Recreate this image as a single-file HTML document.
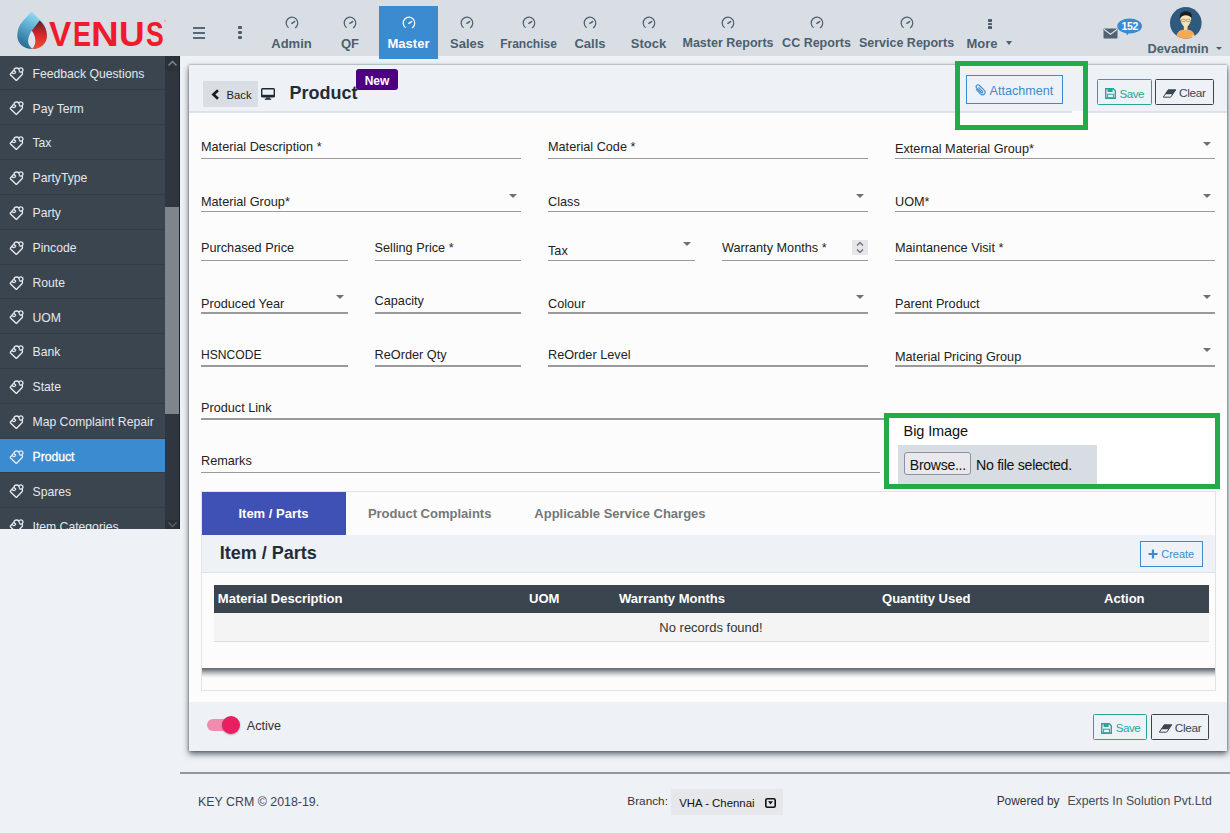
<!DOCTYPE html>
<html><head><meta charset="utf-8"><title>Product</title>
<style>
html,body{margin:0;padding:0;}
body{width:1230px;height:833px;overflow:hidden;position:relative;font-family:"Liberation Sans", sans-serif;background:#eef1f5;}
.r{position:absolute;}
.t{position:absolute;white-space:nowrap;}
</style></head><body>
<div class="r" style="left:0px;top:0px;width:1230px;height:833px;background:#eef1f5"></div>
<div class="r" style="left:0px;top:0px;width:1230px;height:56px;background:#d9dee5"></div>
<svg class="r" style="left:0px;top:0px" width="60" height="56" viewBox="0 0 60 56">
<defs>
<linearGradient id="gb" x1="0.6" y1="0" x2="0.2" y2="1"><stop offset="0" stop-color="#95e4f8"/><stop offset="0.55" stop-color="#4f9cc4"/><stop offset="1" stop-color="#23658f"/></linearGradient>
<linearGradient id="gr" x1="0" y1="0" x2="0" y2="1"><stop offset="0" stop-color="#5e2426"/><stop offset="0.5" stop-color="#d8252a"/><stop offset="1" stop-color="#f5502a"/></linearGradient>
</defs>
<path d="M31.5 11.4 L22.5 21.5 C19.5 25 17.3 29.5 17.3 35.5 C17.3 43.5 23.5 49 32.1 49 C40.7 49 46.9 43.5 46.9 35.5 C46.9 29.5 44.7 25 41.7 21.5 Z" fill="url(#gb)"/>
<path d="M39.6 20.6 L41.7 22.5 C44.7 26 46.9 30 46.9 35.5 C46.9 43.5 40.7 49 32.3 49 C34.8 46 35.8 43 35.3 39.7 C34.9 36.2 33.6 33.2 31.8 30.8 Z" fill="url(#gr)"/>
<path d="M31.8 30.8 C29.6 33.8 28.1 37.4 28.1 41 C28.1 44.4 29.9 46.9 32.3 48.8 C34.6 46 35.6 43 35.3 39.7 C34.9 36.2 33.6 33.2 31.8 30.8 Z" fill="#dfe4ea"/>
</svg>
<div class="t" style="left:49.00px;top:17.2px;font-size:35.5px;line-height:34px;font-weight:700;color:#ef1a2b;transform:scaleX(0.94);transform-origin:0 0">V</div>
<div class="t" style="left:72.60px;top:17.2px;font-size:35.5px;line-height:34px;font-weight:700;color:#ef1a2b;transform:scaleX(0.76);transform-origin:0 0">E</div>
<div class="t" style="left:91.13px;top:17.2px;font-size:35.5px;line-height:34px;font-weight:700;color:#ef1a2b;transform:scaleX(1.08);transform-origin:0 0">N</div>
<div class="t" style="left:118.90px;top:17.2px;font-size:35.5px;line-height:34px;font-weight:700;color:#ef1a2b;transform:scaleX(1.0);transform-origin:0 0">U</div>
<div class="t" style="left:145.55px;top:17.2px;font-size:35.5px;line-height:34px;font-weight:700;color:#ef1a2b;transform:scaleX(0.75);transform-origin:0 0">S</div>
<div class="r" style="left:163.5px;top:19.5px;width:2.4px;height:2.4px;border-radius:50%;background:#f3a0a6;"></div>
<div class="r" style="left:193.2px;top:27.2px;width:12.0px;height:1.6999999999999993px;background:#56697a"></div>
<div class="r" style="left:193.2px;top:32.2px;width:12.0px;height:1.7000000000000028px;background:#56697a"></div>
<div class="r" style="left:193.2px;top:37.2px;width:12.0px;height:1.7000000000000028px;background:#56697a"></div>
<div class="r" style="left:238.2px;top:26px;width:4.0px;height:3.3000000000000007px;background:#4b5f6d;border-radius:1px"></div>
<div class="r" style="left:238.2px;top:30.8px;width:4.0px;height:3.3000000000000007px;background:#4b5f6d;border-radius:1px"></div>
<div class="r" style="left:238.2px;top:35.5px;width:4.0px;height:3.299999999999997px;background:#4b5f6d;border-radius:1px"></div>
<div class="r" style="left:379px;top:6px;width:59px;height:53px;background:#3a8bd0"></div>
<svg class="r" style="left:284.5px;top:16.4px" width="14" height="14" viewBox="0 0 14 14">
<path d="M3.59 11.69 A5.8 5.8 0 1 1 10.07 11.92" fill="none" stroke="#4b5f6d" stroke-width="1.25"/>
<path d="M6.9 7.3 L9.6 5.6" stroke="#4b5f6d" stroke-width="1.5" stroke-linecap="round"/>
</svg>
<div class="t" style="left:91.5px;width:400px;text-align:center;top:36.80px;font-size:13px;line-height:13px;font-weight:700;color:#4b5f6d;">Admin</div>
<svg class="r" style="left:343px;top:16.4px" width="14" height="14" viewBox="0 0 14 14">
<path d="M3.59 11.69 A5.8 5.8 0 1 1 10.07 11.92" fill="none" stroke="#4b5f6d" stroke-width="1.25"/>
<path d="M6.9 7.3 L9.6 5.6" stroke="#4b5f6d" stroke-width="1.5" stroke-linecap="round"/>
</svg>
<div class="t" style="left:150px;width:400px;text-align:center;top:36.80px;font-size:13px;line-height:13px;font-weight:700;color:#4b5f6d;">QF</div>
<svg class="r" style="left:401.5px;top:16.4px" width="14" height="14" viewBox="0 0 14 14">
<path d="M3.59 11.69 A5.8 5.8 0 1 1 10.07 11.92" fill="none" stroke="#fff" stroke-width="1.25"/>
<path d="M6.9 7.3 L9.6 5.6" stroke="#fff" stroke-width="1.5" stroke-linecap="round"/>
</svg>
<div class="t" style="left:208.5px;width:400px;text-align:center;top:36.80px;font-size:13px;line-height:13px;font-weight:700;color:#fff;">Master</div>
<svg class="r" style="left:460px;top:16.4px" width="14" height="14" viewBox="0 0 14 14">
<path d="M3.59 11.69 A5.8 5.8 0 1 1 10.07 11.92" fill="none" stroke="#4b5f6d" stroke-width="1.25"/>
<path d="M6.9 7.3 L9.6 5.6" stroke="#4b5f6d" stroke-width="1.5" stroke-linecap="round"/>
</svg>
<div class="t" style="left:267px;width:400px;text-align:center;top:36.80px;font-size:13px;line-height:13px;font-weight:700;color:#4b5f6d;">Sales</div>
<svg class="r" style="left:521.5px;top:16.4px" width="14" height="14" viewBox="0 0 14 14">
<path d="M3.59 11.69 A5.8 5.8 0 1 1 10.07 11.92" fill="none" stroke="#4b5f6d" stroke-width="1.25"/>
<path d="M6.9 7.3 L9.6 5.6" stroke="#4b5f6d" stroke-width="1.5" stroke-linecap="round"/>
</svg>
<div class="t" style="left:328.5px;width:400px;text-align:center;top:37.64px;font-size:12px;line-height:12px;font-weight:700;color:#4b5f6d;">Franchise</div>
<svg class="r" style="left:583px;top:16.4px" width="14" height="14" viewBox="0 0 14 14">
<path d="M3.59 11.69 A5.8 5.8 0 1 1 10.07 11.92" fill="none" stroke="#4b5f6d" stroke-width="1.25"/>
<path d="M6.9 7.3 L9.6 5.6" stroke="#4b5f6d" stroke-width="1.5" stroke-linecap="round"/>
</svg>
<div class="t" style="left:390px;width:400px;text-align:center;top:36.80px;font-size:13px;line-height:13px;font-weight:700;color:#4b5f6d;">Calls</div>
<svg class="r" style="left:641.5px;top:16.4px" width="14" height="14" viewBox="0 0 14 14">
<path d="M3.59 11.69 A5.8 5.8 0 1 1 10.07 11.92" fill="none" stroke="#4b5f6d" stroke-width="1.25"/>
<path d="M6.9 7.3 L9.6 5.6" stroke="#4b5f6d" stroke-width="1.5" stroke-linecap="round"/>
</svg>
<div class="t" style="left:448.5px;width:400px;text-align:center;top:36.80px;font-size:13px;line-height:13px;font-weight:700;color:#4b5f6d;">Stock</div>
<svg class="r" style="left:721px;top:16.4px" width="14" height="14" viewBox="0 0 14 14">
<path d="M3.59 11.69 A5.8 5.8 0 1 1 10.07 11.92" fill="none" stroke="#4b5f6d" stroke-width="1.25"/>
<path d="M6.9 7.3 L9.6 5.6" stroke="#4b5f6d" stroke-width="1.5" stroke-linecap="round"/>
</svg>
<div class="t" style="left:528px;width:400px;text-align:center;top:37.22px;font-size:12.5px;line-height:12.5px;font-weight:700;color:#4b5f6d;">Master Reports</div>
<svg class="r" style="left:809.5px;top:16.4px" width="14" height="14" viewBox="0 0 14 14">
<path d="M3.59 11.69 A5.8 5.8 0 1 1 10.07 11.92" fill="none" stroke="#4b5f6d" stroke-width="1.25"/>
<path d="M6.9 7.3 L9.6 5.6" stroke="#4b5f6d" stroke-width="1.5" stroke-linecap="round"/>
</svg>
<div class="t" style="left:616.5px;width:400px;text-align:center;top:37.22px;font-size:12.5px;line-height:12.5px;font-weight:700;color:#4b5f6d;">CC Reports</div>
<svg class="r" style="left:899.5px;top:16.4px" width="14" height="14" viewBox="0 0 14 14">
<path d="M3.59 11.69 A5.8 5.8 0 1 1 10.07 11.92" fill="none" stroke="#4b5f6d" stroke-width="1.25"/>
<path d="M6.9 7.3 L9.6 5.6" stroke="#4b5f6d" stroke-width="1.5" stroke-linecap="round"/>
</svg>
<div class="t" style="left:706.5px;width:400px;text-align:center;top:37.22px;font-size:12.5px;line-height:12.5px;font-weight:700;color:#4b5f6d;">Service Reports</div>
<div class="r" style="left:988px;top:19.3px;width:3.5px;height:2.6000000000000014px;background:#4b5f6d;border-radius:0.5px"></div>
<div class="r" style="left:988px;top:22.8px;width:3.5px;height:2.6000000000000014px;background:#4b5f6d;border-radius:0.5px"></div>
<div class="r" style="left:988px;top:26.3px;width:3.5px;height:2.6000000000000014px;background:#4b5f6d;border-radius:0.5px"></div>
<div class="t " style="left:966.5px;top:36.80px;font-size:13px;line-height:13px;font-weight:700;color:#4b5f6d;">More</div>
<div class="r" style="left:1006px;top:40.5px;width:0;height:0;border-left:3.5px solid transparent;border-right:3.5px solid transparent;border-top:4px solid #4b5f6d"></div>
<svg class="r" style="left:1103px;top:28px" width="15" height="11" viewBox="0 0 15 11">
<rect x="0.5" y="0.5" width="14" height="10" rx="0.8" fill="#4f6373"/>
<path d="M0.8 1.2 L7.5 6.2 L14.2 1.2" fill="none" stroke="#d9dee5" stroke-width="1.1"/>
</svg>
<svg class="r" style="left:1117px;top:17.5px" width="26" height="18" viewBox="0 0 26 18">
<ellipse cx="12.6" cy="8" rx="12.4" ry="7.6" fill="#3a8bd0"/>
<path d="M8.5 14 L10.3 17.5 L12.3 14Z" fill="#3a8bd0"/>
</svg>
<div class="t" style="left:929.8px;width:400px;text-align:center;top:21.11px;font-size:10.5px;line-height:10.5px;font-weight:700;color:#fff;letter-spacing:-0.3px;">152</div>
<svg class="r" style="left:1169.5px;top:6.8px" width="32" height="32" viewBox="0 0 32 32">
<defs><clipPath id="ac"><circle cx="15.8" cy="15.9" r="15.8"/></clipPath></defs>
<circle cx="15.8" cy="15.9" r="15.8" fill="#2e5a7d"/>
<g clip-path="url(#ac)">
<path d="M5.5 34 C6 26.5 8.5 23.5 12.8 22.8 L15.6 23.6 L18.5 22.8 C22.8 23.5 25.2 26.5 25.8 34Z" fill="#f6a955"/>
<rect x="13.8" y="17" width="3.8" height="6.5" fill="#f7dcaa"/>
<path d="M10.2 11 C10.2 8.5 12.5 7.5 15.7 7.5 C19 7.5 21.2 8.5 21.2 11 C21.2 15 18.8 19 15.7 20.6 C12.6 19 10.2 15 10.2 11Z" fill="#f9e4b5"/>
<path d="M9.8 12.2 C9.2 6.8 11.5 4.3 15.5 4.2 C19.5 4.1 22.6 6.2 21.6 10.8 C20.2 9.4 18.2 8.4 15.8 8.2 C13.2 8.3 11.5 9.5 10.8 10.6 C10.4 11.1 10.1 11.6 9.8 12.2Z" fill="#1d1e22"/>
<rect x="11.5" y="12.2" width="3.8" height="2.4" rx="1" fill="none" stroke="#8a8570" stroke-width="0.7"/>
<rect x="16.3" y="12.2" width="3.8" height="2.4" rx="1" fill="none" stroke="#8a8570" stroke-width="0.7"/>
<rect x="21.6" y="28.4" width="3" height="2" rx="0.8" fill="#cfe6f3"/>
</g>
</svg>
<div class="t " style="left:1147.5px;top:42.66px;font-size:12.8px;line-height:12.8px;font-weight:700;color:#4b5f6d;">Devadmin</div>
<div class="r" style="left:1215.5px;top:47px;width:0;height:0;border-left:3.6px solid transparent;border-right:3.6px solid transparent;border-top:3.6px solid #4b5f6d"></div>
<div class="r" style="left:0px;top:56px;width:180px;height:472.5px;background:#3b4550"></div>
<svg class="r" style="left:6px;top:62.580000000000005px" width="22" height="22" viewBox="0 0 22 22">
<path d="M6.2 9.2 L4.6 10.8 C4.2 11.2 4.2 11.7 4.6 12.1 L9.8 17 C10.1 17.3 10.6 17.3 10.9 17 L16.2 11.5 C16.5 11.1 16.6 10.6 16.4 10.1 L16.2 8.7 C17.6 7.3 17 4.8 14.8 4.8 C13.8 4.8 13.1 5.5 12.8 6.2 C12.1 5.2 10.8 4.8 9.6 5.2 C8.4 5.6 7.9 6.8 8.2 7.8 C7.2 7.6 6.2 8.2 6.2 9.2 Z" fill="none" stroke="#e8ebee" stroke-width="1.35" stroke-linejoin="round"/>
<path d="M6.2 9.2 C6.4 10.4 7.8 10.9 8.8 10.2 L9.9 9.3 M8.2 7.8 C9 8 9.6 8.5 9.9 9.3 M12.8 6.2 C13.3 7 13.6 7.8 13.4 8.6 M16.2 8.7 C15.6 9.1 14.6 9.2 13.4 8.6" fill="none" stroke="#e8ebee" stroke-width="1.2"/>
</svg>
<div class="t " style="left:32.5px;top:67.85px;font-size:12.2px;line-height:12.2px;font-weight:400;color:#e4e8ec;">Feedback Questions</div>
<div class="r" style="left:0px;top:89.4px;width:165px;height:1.0px;background:#333c46"></div>
<svg class="r" style="left:6px;top:97.4px" width="22" height="22" viewBox="0 0 22 22">
<path d="M6.2 9.2 L4.6 10.8 C4.2 11.2 4.2 11.7 4.6 12.1 L9.8 17 C10.1 17.3 10.6 17.3 10.9 17 L16.2 11.5 C16.5 11.1 16.6 10.6 16.4 10.1 L16.2 8.7 C17.6 7.3 17 4.8 14.8 4.8 C13.8 4.8 13.1 5.5 12.8 6.2 C12.1 5.2 10.8 4.8 9.6 5.2 C8.4 5.6 7.9 6.8 8.2 7.8 C7.2 7.6 6.2 8.2 6.2 9.2 Z" fill="none" stroke="#e8ebee" stroke-width="1.35" stroke-linejoin="round"/>
<path d="M6.2 9.2 C6.4 10.4 7.8 10.9 8.8 10.2 L9.9 9.3 M8.2 7.8 C9 8 9.6 8.5 9.9 9.3 M12.8 6.2 C13.3 7 13.6 7.8 13.4 8.6 M16.2 8.7 C15.6 9.1 14.6 9.2 13.4 8.6" fill="none" stroke="#e8ebee" stroke-width="1.2"/>
</svg>
<div class="t " style="left:32.5px;top:102.67px;font-size:12.2px;line-height:12.2px;font-weight:400;color:#e4e8ec;">Pay Term</div>
<div class="r" style="left:0px;top:124.22px;width:165px;height:1.0px;background:#333c46"></div>
<svg class="r" style="left:6px;top:132.22px" width="22" height="22" viewBox="0 0 22 22">
<path d="M6.2 9.2 L4.6 10.8 C4.2 11.2 4.2 11.7 4.6 12.1 L9.8 17 C10.1 17.3 10.6 17.3 10.9 17 L16.2 11.5 C16.5 11.1 16.6 10.6 16.4 10.1 L16.2 8.7 C17.6 7.3 17 4.8 14.8 4.8 C13.8 4.8 13.1 5.5 12.8 6.2 C12.1 5.2 10.8 4.8 9.6 5.2 C8.4 5.6 7.9 6.8 8.2 7.8 C7.2 7.6 6.2 8.2 6.2 9.2 Z" fill="none" stroke="#e8ebee" stroke-width="1.35" stroke-linejoin="round"/>
<path d="M6.2 9.2 C6.4 10.4 7.8 10.9 8.8 10.2 L9.9 9.3 M8.2 7.8 C9 8 9.6 8.5 9.9 9.3 M12.8 6.2 C13.3 7 13.6 7.8 13.4 8.6 M16.2 8.7 C15.6 9.1 14.6 9.2 13.4 8.6" fill="none" stroke="#e8ebee" stroke-width="1.2"/>
</svg>
<div class="t " style="left:32.5px;top:137.49px;font-size:12.2px;line-height:12.2px;font-weight:400;color:#e4e8ec;">Tax</div>
<div class="r" style="left:0px;top:159.04000000000002px;width:165px;height:1.0px;background:#333c46"></div>
<svg class="r" style="left:6px;top:167.04000000000002px" width="22" height="22" viewBox="0 0 22 22">
<path d="M6.2 9.2 L4.6 10.8 C4.2 11.2 4.2 11.7 4.6 12.1 L9.8 17 C10.1 17.3 10.6 17.3 10.9 17 L16.2 11.5 C16.5 11.1 16.6 10.6 16.4 10.1 L16.2 8.7 C17.6 7.3 17 4.8 14.8 4.8 C13.8 4.8 13.1 5.5 12.8 6.2 C12.1 5.2 10.8 4.8 9.6 5.2 C8.4 5.6 7.9 6.8 8.2 7.8 C7.2 7.6 6.2 8.2 6.2 9.2 Z" fill="none" stroke="#e8ebee" stroke-width="1.35" stroke-linejoin="round"/>
<path d="M6.2 9.2 C6.4 10.4 7.8 10.9 8.8 10.2 L9.9 9.3 M8.2 7.8 C9 8 9.6 8.5 9.9 9.3 M12.8 6.2 C13.3 7 13.6 7.8 13.4 8.6 M16.2 8.7 C15.6 9.1 14.6 9.2 13.4 8.6" fill="none" stroke="#e8ebee" stroke-width="1.2"/>
</svg>
<div class="t " style="left:32.5px;top:172.31px;font-size:12.2px;line-height:12.2px;font-weight:400;color:#e4e8ec;">PartyType</div>
<div class="r" style="left:0px;top:193.86px;width:165px;height:1.0px;background:#333c46"></div>
<svg class="r" style="left:6px;top:201.86px" width="22" height="22" viewBox="0 0 22 22">
<path d="M6.2 9.2 L4.6 10.8 C4.2 11.2 4.2 11.7 4.6 12.1 L9.8 17 C10.1 17.3 10.6 17.3 10.9 17 L16.2 11.5 C16.5 11.1 16.6 10.6 16.4 10.1 L16.2 8.7 C17.6 7.3 17 4.8 14.8 4.8 C13.8 4.8 13.1 5.5 12.8 6.2 C12.1 5.2 10.8 4.8 9.6 5.2 C8.4 5.6 7.9 6.8 8.2 7.8 C7.2 7.6 6.2 8.2 6.2 9.2 Z" fill="none" stroke="#e8ebee" stroke-width="1.35" stroke-linejoin="round"/>
<path d="M6.2 9.2 C6.4 10.4 7.8 10.9 8.8 10.2 L9.9 9.3 M8.2 7.8 C9 8 9.6 8.5 9.9 9.3 M12.8 6.2 C13.3 7 13.6 7.8 13.4 8.6 M16.2 8.7 C15.6 9.1 14.6 9.2 13.4 8.6" fill="none" stroke="#e8ebee" stroke-width="1.2"/>
</svg>
<div class="t " style="left:32.5px;top:207.13px;font-size:12.2px;line-height:12.2px;font-weight:400;color:#e4e8ec;">Party</div>
<div class="r" style="left:0px;top:228.68px;width:165px;height:1.0px;background:#333c46"></div>
<svg class="r" style="left:6px;top:236.68px" width="22" height="22" viewBox="0 0 22 22">
<path d="M6.2 9.2 L4.6 10.8 C4.2 11.2 4.2 11.7 4.6 12.1 L9.8 17 C10.1 17.3 10.6 17.3 10.9 17 L16.2 11.5 C16.5 11.1 16.6 10.6 16.4 10.1 L16.2 8.7 C17.6 7.3 17 4.8 14.8 4.8 C13.8 4.8 13.1 5.5 12.8 6.2 C12.1 5.2 10.8 4.8 9.6 5.2 C8.4 5.6 7.9 6.8 8.2 7.8 C7.2 7.6 6.2 8.2 6.2 9.2 Z" fill="none" stroke="#e8ebee" stroke-width="1.35" stroke-linejoin="round"/>
<path d="M6.2 9.2 C6.4 10.4 7.8 10.9 8.8 10.2 L9.9 9.3 M8.2 7.8 C9 8 9.6 8.5 9.9 9.3 M12.8 6.2 C13.3 7 13.6 7.8 13.4 8.6 M16.2 8.7 C15.6 9.1 14.6 9.2 13.4 8.6" fill="none" stroke="#e8ebee" stroke-width="1.2"/>
</svg>
<div class="t " style="left:32.5px;top:241.95px;font-size:12.2px;line-height:12.2px;font-weight:400;color:#e4e8ec;">Pincode</div>
<div class="r" style="left:0px;top:263.5px;width:165px;height:1.0px;background:#333c46"></div>
<svg class="r" style="left:6px;top:271.5px" width="22" height="22" viewBox="0 0 22 22">
<path d="M6.2 9.2 L4.6 10.8 C4.2 11.2 4.2 11.7 4.6 12.1 L9.8 17 C10.1 17.3 10.6 17.3 10.9 17 L16.2 11.5 C16.5 11.1 16.6 10.6 16.4 10.1 L16.2 8.7 C17.6 7.3 17 4.8 14.8 4.8 C13.8 4.8 13.1 5.5 12.8 6.2 C12.1 5.2 10.8 4.8 9.6 5.2 C8.4 5.6 7.9 6.8 8.2 7.8 C7.2 7.6 6.2 8.2 6.2 9.2 Z" fill="none" stroke="#e8ebee" stroke-width="1.35" stroke-linejoin="round"/>
<path d="M6.2 9.2 C6.4 10.4 7.8 10.9 8.8 10.2 L9.9 9.3 M8.2 7.8 C9 8 9.6 8.5 9.9 9.3 M12.8 6.2 C13.3 7 13.6 7.8 13.4 8.6 M16.2 8.7 C15.6 9.1 14.6 9.2 13.4 8.6" fill="none" stroke="#e8ebee" stroke-width="1.2"/>
</svg>
<div class="t " style="left:32.5px;top:276.77px;font-size:12.2px;line-height:12.2px;font-weight:400;color:#e4e8ec;">Route</div>
<div class="r" style="left:0px;top:298.32000000000005px;width:165px;height:1.0px;background:#333c46"></div>
<svg class="r" style="left:6px;top:306.32000000000005px" width="22" height="22" viewBox="0 0 22 22">
<path d="M6.2 9.2 L4.6 10.8 C4.2 11.2 4.2 11.7 4.6 12.1 L9.8 17 C10.1 17.3 10.6 17.3 10.9 17 L16.2 11.5 C16.5 11.1 16.6 10.6 16.4 10.1 L16.2 8.7 C17.6 7.3 17 4.8 14.8 4.8 C13.8 4.8 13.1 5.5 12.8 6.2 C12.1 5.2 10.8 4.8 9.6 5.2 C8.4 5.6 7.9 6.8 8.2 7.8 C7.2 7.6 6.2 8.2 6.2 9.2 Z" fill="none" stroke="#e8ebee" stroke-width="1.35" stroke-linejoin="round"/>
<path d="M6.2 9.2 C6.4 10.4 7.8 10.9 8.8 10.2 L9.9 9.3 M8.2 7.8 C9 8 9.6 8.5 9.9 9.3 M12.8 6.2 C13.3 7 13.6 7.8 13.4 8.6 M16.2 8.7 C15.6 9.1 14.6 9.2 13.4 8.6" fill="none" stroke="#e8ebee" stroke-width="1.2"/>
</svg>
<div class="t " style="left:32.5px;top:311.59px;font-size:12.2px;line-height:12.2px;font-weight:400;color:#e4e8ec;">UOM</div>
<div class="r" style="left:0px;top:333.14px;width:165px;height:1.0px;background:#333c46"></div>
<svg class="r" style="left:6px;top:341.14px" width="22" height="22" viewBox="0 0 22 22">
<path d="M6.2 9.2 L4.6 10.8 C4.2 11.2 4.2 11.7 4.6 12.1 L9.8 17 C10.1 17.3 10.6 17.3 10.9 17 L16.2 11.5 C16.5 11.1 16.6 10.6 16.4 10.1 L16.2 8.7 C17.6 7.3 17 4.8 14.8 4.8 C13.8 4.8 13.1 5.5 12.8 6.2 C12.1 5.2 10.8 4.8 9.6 5.2 C8.4 5.6 7.9 6.8 8.2 7.8 C7.2 7.6 6.2 8.2 6.2 9.2 Z" fill="none" stroke="#e8ebee" stroke-width="1.35" stroke-linejoin="round"/>
<path d="M6.2 9.2 C6.4 10.4 7.8 10.9 8.8 10.2 L9.9 9.3 M8.2 7.8 C9 8 9.6 8.5 9.9 9.3 M12.8 6.2 C13.3 7 13.6 7.8 13.4 8.6 M16.2 8.7 C15.6 9.1 14.6 9.2 13.4 8.6" fill="none" stroke="#e8ebee" stroke-width="1.2"/>
</svg>
<div class="t " style="left:32.5px;top:346.41px;font-size:12.2px;line-height:12.2px;font-weight:400;color:#e4e8ec;">Bank</div>
<div class="r" style="left:0px;top:367.96000000000004px;width:165px;height:1.0px;background:#333c46"></div>
<svg class="r" style="left:6px;top:375.96000000000004px" width="22" height="22" viewBox="0 0 22 22">
<path d="M6.2 9.2 L4.6 10.8 C4.2 11.2 4.2 11.7 4.6 12.1 L9.8 17 C10.1 17.3 10.6 17.3 10.9 17 L16.2 11.5 C16.5 11.1 16.6 10.6 16.4 10.1 L16.2 8.7 C17.6 7.3 17 4.8 14.8 4.8 C13.8 4.8 13.1 5.5 12.8 6.2 C12.1 5.2 10.8 4.8 9.6 5.2 C8.4 5.6 7.9 6.8 8.2 7.8 C7.2 7.6 6.2 8.2 6.2 9.2 Z" fill="none" stroke="#e8ebee" stroke-width="1.35" stroke-linejoin="round"/>
<path d="M6.2 9.2 C6.4 10.4 7.8 10.9 8.8 10.2 L9.9 9.3 M8.2 7.8 C9 8 9.6 8.5 9.9 9.3 M12.8 6.2 C13.3 7 13.6 7.8 13.4 8.6 M16.2 8.7 C15.6 9.1 14.6 9.2 13.4 8.6" fill="none" stroke="#e8ebee" stroke-width="1.2"/>
</svg>
<div class="t " style="left:32.5px;top:381.23px;font-size:12.2px;line-height:12.2px;font-weight:400;color:#e4e8ec;">State</div>
<div class="r" style="left:0px;top:402.78px;width:165px;height:1.0px;background:#333c46"></div>
<svg class="r" style="left:6px;top:410.78px" width="22" height="22" viewBox="0 0 22 22">
<path d="M6.2 9.2 L4.6 10.8 C4.2 11.2 4.2 11.7 4.6 12.1 L9.8 17 C10.1 17.3 10.6 17.3 10.9 17 L16.2 11.5 C16.5 11.1 16.6 10.6 16.4 10.1 L16.2 8.7 C17.6 7.3 17 4.8 14.8 4.8 C13.8 4.8 13.1 5.5 12.8 6.2 C12.1 5.2 10.8 4.8 9.6 5.2 C8.4 5.6 7.9 6.8 8.2 7.8 C7.2 7.6 6.2 8.2 6.2 9.2 Z" fill="none" stroke="#e8ebee" stroke-width="1.35" stroke-linejoin="round"/>
<path d="M6.2 9.2 C6.4 10.4 7.8 10.9 8.8 10.2 L9.9 9.3 M8.2 7.8 C9 8 9.6 8.5 9.9 9.3 M12.8 6.2 C13.3 7 13.6 7.8 13.4 8.6 M16.2 8.7 C15.6 9.1 14.6 9.2 13.4 8.6" fill="none" stroke="#e8ebee" stroke-width="1.2"/>
</svg>
<div class="t " style="left:32.5px;top:416.05px;font-size:12.2px;line-height:12.2px;font-weight:400;color:#e4e8ec;">Map Complaint Repair</div>
<div class="r" style="left:0px;top:437.6px;width:165px;height:34.81999999999999px;background:#3a8bd0"></div>
<div class="r" style="left:0px;top:437.6px;width:165px;height:1.0px;background:#333c46"></div>
<svg class="r" style="left:6px;top:445.6px" width="22" height="22" viewBox="0 0 22 22">
<path d="M6.2 9.2 L4.6 10.8 C4.2 11.2 4.2 11.7 4.6 12.1 L9.8 17 C10.1 17.3 10.6 17.3 10.9 17 L16.2 11.5 C16.5 11.1 16.6 10.6 16.4 10.1 L16.2 8.7 C17.6 7.3 17 4.8 14.8 4.8 C13.8 4.8 13.1 5.5 12.8 6.2 C12.1 5.2 10.8 4.8 9.6 5.2 C8.4 5.6 7.9 6.8 8.2 7.8 C7.2 7.6 6.2 8.2 6.2 9.2 Z" fill="none" stroke="#e8ebee" stroke-width="1.35" stroke-linejoin="round"/>
<path d="M6.2 9.2 C6.4 10.4 7.8 10.9 8.8 10.2 L9.9 9.3 M8.2 7.8 C9 8 9.6 8.5 9.9 9.3 M12.8 6.2 C13.3 7 13.6 7.8 13.4 8.6 M16.2 8.7 C15.6 9.1 14.6 9.2 13.4 8.6" fill="none" stroke="#e8ebee" stroke-width="1.2"/>
</svg>
<div class="t " style="left:32.5px;top:450.87px;font-size:12.2px;line-height:12.2px;font-weight:400;color:#fff;-webkit-text-stroke:0.3px #fff;">Product</div>
<div class="r" style="left:0px;top:472.41999999999996px;width:165px;height:1.0px;background:#333c46"></div>
<svg class="r" style="left:6px;top:480.41999999999996px" width="22" height="22" viewBox="0 0 22 22">
<path d="M6.2 9.2 L4.6 10.8 C4.2 11.2 4.2 11.7 4.6 12.1 L9.8 17 C10.1 17.3 10.6 17.3 10.9 17 L16.2 11.5 C16.5 11.1 16.6 10.6 16.4 10.1 L16.2 8.7 C17.6 7.3 17 4.8 14.8 4.8 C13.8 4.8 13.1 5.5 12.8 6.2 C12.1 5.2 10.8 4.8 9.6 5.2 C8.4 5.6 7.9 6.8 8.2 7.8 C7.2 7.6 6.2 8.2 6.2 9.2 Z" fill="none" stroke="#e8ebee" stroke-width="1.35" stroke-linejoin="round"/>
<path d="M6.2 9.2 C6.4 10.4 7.8 10.9 8.8 10.2 L9.9 9.3 M8.2 7.8 C9 8 9.6 8.5 9.9 9.3 M12.8 6.2 C13.3 7 13.6 7.8 13.4 8.6 M16.2 8.7 C15.6 9.1 14.6 9.2 13.4 8.6" fill="none" stroke="#e8ebee" stroke-width="1.2"/>
</svg>
<div class="t " style="left:32.5px;top:485.69px;font-size:12.2px;line-height:12.2px;font-weight:400;color:#e4e8ec;">Spares</div>
<div class="r" style="left:0px;top:507.24px;width:165px;height:1.0px;background:#333c46"></div>
<svg class="r" style="left:6px;top:515.24px" width="22" height="22" viewBox="0 0 22 22">
<path d="M6.2 9.2 L4.6 10.8 C4.2 11.2 4.2 11.7 4.6 12.1 L9.8 17 C10.1 17.3 10.6 17.3 10.9 17 L16.2 11.5 C16.5 11.1 16.6 10.6 16.4 10.1 L16.2 8.7 C17.6 7.3 17 4.8 14.8 4.8 C13.8 4.8 13.1 5.5 12.8 6.2 C12.1 5.2 10.8 4.8 9.6 5.2 C8.4 5.6 7.9 6.8 8.2 7.8 C7.2 7.6 6.2 8.2 6.2 9.2 Z" fill="none" stroke="#e8ebee" stroke-width="1.35" stroke-linejoin="round"/>
<path d="M6.2 9.2 C6.4 10.4 7.8 10.9 8.8 10.2 L9.9 9.3 M8.2 7.8 C9 8 9.6 8.5 9.9 9.3 M12.8 6.2 C13.3 7 13.6 7.8 13.4 8.6 M16.2 8.7 C15.6 9.1 14.6 9.2 13.4 8.6" fill="none" stroke="#e8ebee" stroke-width="1.2"/>
</svg>
<div class="t " style="left:32.5px;top:520.51px;font-size:12.2px;line-height:12.2px;font-weight:400;color:#e4e8ec;">Item Categories</div>
<div class="r" style="left:165px;top:56px;width:15px;height:472.5px;background:#2f363f"></div>
<div class="r" style="left:165px;top:56px;width:15px;height:14.5px;background:#2a3139"></div>
<svg class="r" style="left:167px;top:59px" width="11" height="8" viewBox="0 0 11 8"><path d="M1.5 6.5 L5.5 2.5 L9.5 6.5" fill="none" stroke="#77808a" stroke-width="1.6"/></svg>
<div class="r" style="left:165px;top:207px;width:15px;height:206.5px;background:#7f858c"></div>
<div class="r" style="left:165px;top:520px;width:15px;height:8.5px;background:#2a3139"></div>
<div class="r" style="left:179px;top:56px;width:1px;height:472.5px;background:#1c222a"></div>
<svg class="r" style="left:167px;top:521px" width="11" height="8" viewBox="0 0 11 8"><path d="M1.5 1.5 L5.5 5.5 L9.5 1.5" fill="none" stroke="#55606a" stroke-width="1.4"/></svg>
<div class="r" style="left:0px;top:528.5px;width:180px;height:304.5px;background:#eef1f5"></div>
<div class="r" style="left:189px;top:65px;width:1038px;height:686px;background:#fcfcfc;box-shadow:0 3px 6px rgba(30,40,50,0.7), 0 0 2px rgba(30,40,50,0.5)"></div>
<div class="r" style="left:189px;top:65px;width:1038px;height:46px;background:#eef1f5"></div>
<div class="r" style="left:189px;top:111px;width:1038px;height:2px;background:#dde2e8"></div>
<div class="r" style="left:189px;top:702.3px;width:1038px;height:48.700000000000045px;background:#eef1f5"></div>
<div class="r" style="left:203px;top:81px;width:54.5px;height:26px;background:#d9dee5"></div>
<svg class="r" style="left:211px;top:89px" width="9" height="11" viewBox="0 0 9 11"><path d="M7 1.2 L2.4 5.5 L7 9.8" fill="none" stroke="#1a1a1a" stroke-width="2.6"/></svg>
<div class="t " style="left:226.5px;top:90.23px;font-size:11.3px;line-height:11.3px;font-weight:400;color:#222;">Back</div>
<svg class="r" style="left:261px;top:88px" width="14" height="12" viewBox="0 0 14 12">
<rect x="0.7" y="0.7" width="12.6" height="8" rx="0.8" fill="none" stroke="#1d2a33" stroke-width="1.4"/>
<rect x="0.7" y="6.8" width="12.6" height="2" fill="#1d2a33"/>
<rect x="5" y="9.5" width="4" height="1.3" fill="#1d2a33"/>
<rect x="3.8" y="10.6" width="6.4" height="1.2" fill="#1d2a33"/>
</svg>
<div class="t " style="left:289.5px;top:84.46px;font-size:18px;line-height:18px;font-weight:700;color:#1f2d38;">Product</div>
<div class="r" style="left:356px;top:69px;width:42px;height:21px;background:#4b0082;border-radius:3px"></div>
<div class="t" style="left:177px;width:400px;text-align:center;top:74.64px;font-size:12px;line-height:12px;font-weight:700;color:#fff;">New</div>
<div class="r" style="left:955px;top:61px;width:133px;height:69px;border:5px solid #22ab48;box-sizing:border-box"></div>
<div class="r" style="left:1072px;top:111px;width:11px;height:2px;background:#fcfcfc"></div>
<div class="r" style="left:966px;top:75px;width:97px;height:29px;border:1px solid #3a8bd0;box-sizing:border-box"></div>
<svg class="r" style="left:974px;top:84px" width="12" height="12" viewBox="0 0 12 12">
<g transform="translate(12,0) scale(-1,1)"><path d="M10 5.2 L5.6 9.8 C4.4 11 2.6 11 1.6 10 C0.6 9 0.7 7.3 1.9 6.1 L6.5 1.5 C7.3 0.7 8.6 0.7 9.3 1.4 C10 2.1 10 3.3 9.2 4.1 L4.8 8.5 C4.4 8.9 3.8 8.9 3.5 8.6 C3.2 8.3 3.2 7.7 3.6 7.3 L7.6 3.3" fill="none" stroke="#3a8bd0" stroke-width="1.1"/></g>
</svg>
<div class="t " style="left:989.5px;top:84.93px;font-size:12.6px;line-height:12.6px;font-weight:400;color:#3a8bd0;">Attachment</div>
<div class="r" style="left:1097px;top:79px;width:55px;height:26px;border:1.2px solid #26a69a;border-radius:1.5px;box-sizing:border-box"></div>
<svg class="r" style="left:1105px;top:87.5px" width="11" height="11" viewBox="0 0 11 11">
<path d="M0.7 0.7 H8.3 L10.3 2.7 V10.3 H0.7 Z" fill="none" stroke="#26a69a" stroke-width="1.4"/>
<rect x="2.6" y="1" width="5" height="3" fill="#26a69a"/>
<rect x="2.6" y="6.2" width="5.8" height="3.6" fill="none" stroke="#26a69a" stroke-width="1"/>
</svg>
<div class="t " style="left:1119.6px;top:88.48px;font-size:11.6px;line-height:11.6px;font-weight:400;color:#26a69a;letter-spacing:-0.5px;">Save</div>
<div class="r" style="left:1155px;top:79px;width:59px;height:26px;border:1.2px solid #3b4550;border-radius:1.5px;box-sizing:border-box"></div>
<svg class="r" style="left:1163px;top:88.5px" width="14" height="10" viewBox="0 0 14 10">
<path d="M5.2 0.8 H12.8 L7.6 8.2 H0.3 Z" fill="none" stroke="#3b4550" stroke-width="1" stroke-linejoin="round"/>
<path d="M5.2 0.8 H12.8 L9.6 5.3 H2.1 Z" fill="#3b4550"/>
</svg>
<div class="t " style="left:1179px;top:88.31px;font-size:11.8px;line-height:11.8px;font-weight:400;color:#3b4550;letter-spacing:-0.3px;">Clear</div>
<div class="t " style="left:201px;top:141.45px;font-size:12.7px;line-height:12.7px;font-weight:400;color:#222;">Material Description *</div>
<div class="r" style="left:201px;top:157.8px;width:320px;height:1.4000000000000057px;background:#9a9a9a"></div>
<div class="t " style="left:548px;top:141.45px;font-size:12.7px;line-height:12.7px;font-weight:400;color:#222;">Material Code *</div>
<div class="r" style="left:548px;top:157.8px;width:320px;height:1.4000000000000057px;background:#9a9a9a"></div>
<div class="t " style="left:895px;top:143.45px;font-size:12.7px;line-height:12.7px;font-weight:400;color:#222;">External Material Group*</div>
<div class="r" style="left:895px;top:157.8px;width:320px;height:1.4000000000000057px;background:#9a9a9a"></div>
<div class="r" style="left:1203px;top:141.5px;width:0;height:0;border-left:4px solid transparent;border-right:4px solid transparent;border-top:4.5px solid #707070"></div>
<div class="t " style="left:201px;top:196.25px;font-size:12.7px;line-height:12.7px;font-weight:400;color:#222;">Material Group*</div>
<div class="r" style="left:201px;top:210.6px;width:320px;height:1.4000000000000057px;background:#9a9a9a"></div>
<div class="r" style="left:509px;top:194.4px;width:0;height:0;border-left:4px solid transparent;border-right:4px solid transparent;border-top:4.5px solid #707070"></div>
<div class="t " style="left:548px;top:196.25px;font-size:12.7px;line-height:12.7px;font-weight:400;color:#222;">Class</div>
<div class="r" style="left:548px;top:210.6px;width:320px;height:1.4000000000000057px;background:#9a9a9a"></div>
<div class="r" style="left:856px;top:194.4px;width:0;height:0;border-left:4px solid transparent;border-right:4px solid transparent;border-top:4.5px solid #707070"></div>
<div class="t " style="left:895px;top:196.25px;font-size:12.7px;line-height:12.7px;font-weight:400;color:#222;">UOM*</div>
<div class="r" style="left:895px;top:210.6px;width:320px;height:1.4000000000000057px;background:#9a9a9a"></div>
<div class="r" style="left:1203px;top:194.4px;width:0;height:0;border-left:4px solid transparent;border-right:4px solid transparent;border-top:4.5px solid #707070"></div>
<div class="t " style="left:201px;top:242.25px;font-size:12.7px;line-height:12.7px;font-weight:400;color:#222;">Purchased Price</div>
<div class="r" style="left:201px;top:259.6px;width:146.60000000000002px;height:1.3999999999999773px;background:#9a9a9a"></div>
<div class="t " style="left:374.6px;top:242.25px;font-size:12.7px;line-height:12.7px;font-weight:400;color:#222;">Selling Price *</div>
<div class="r" style="left:374.6px;top:259.6px;width:146.39999999999998px;height:1.3999999999999773px;background:#9a9a9a"></div>
<div class="t " style="left:548px;top:244.95px;font-size:12.7px;line-height:12.7px;font-weight:400;color:#222;">Tax</div>
<div class="r" style="left:548px;top:259.6px;width:146.60000000000002px;height:1.3999999999999773px;background:#9a9a9a"></div>
<div class="r" style="left:682.6px;top:242.3px;width:0;height:0;border-left:4px solid transparent;border-right:4px solid transparent;border-top:4.5px solid #707070"></div>
<div class="t " style="left:722px;top:242.25px;font-size:12.7px;line-height:12.7px;font-weight:400;color:#222;">Warranty Months *</div>
<div class="r" style="left:722px;top:259.6px;width:146px;height:1.3999999999999773px;background:#9a9a9a"></div>
<div class="r" style="left:852px;top:239.7px;width:16px;height:15.300000000000011px;background:#e6e6ea"></div>
<svg class="r" style="left:854px;top:240px" width="12" height="15" viewBox="0 0 12 15"><path d="M3 5.5 L6 2.5 L9 5.5 M3 9.5 L6 12.5 L9 9.5" fill="none" stroke="#666" stroke-width="1.2"/></svg>
<div class="t " style="left:895px;top:242.25px;font-size:12.7px;line-height:12.7px;font-weight:400;color:#222;">Maintanence Visit *</div>
<div class="r" style="left:895px;top:259.6px;width:320px;height:1.3999999999999773px;background:#9a9a9a"></div>
<div class="t " style="left:201px;top:297.85px;font-size:12.7px;line-height:12.7px;font-weight:400;color:#222;">Produced Year</div>
<div class="r" style="left:201px;top:312.2px;width:146.60000000000002px;height:1.3999999999999773px;background:#9a9a9a"></div>
<div class="r" style="left:335.6px;top:295px;width:0;height:0;border-left:4px solid transparent;border-right:4px solid transparent;border-top:4.5px solid #707070"></div>
<div class="t " style="left:374.6px;top:294.85px;font-size:12.7px;line-height:12.7px;font-weight:400;color:#222;">Capacity</div>
<div class="r" style="left:374.6px;top:312.2px;width:146.39999999999998px;height:1.3999999999999773px;background:#9a9a9a"></div>
<div class="t " style="left:548px;top:297.85px;font-size:12.7px;line-height:12.7px;font-weight:400;color:#222;">Colour</div>
<div class="r" style="left:548px;top:312.2px;width:320px;height:1.3999999999999773px;background:#9a9a9a"></div>
<div class="r" style="left:856px;top:295px;width:0;height:0;border-left:4px solid transparent;border-right:4px solid transparent;border-top:4.5px solid #707070"></div>
<div class="t " style="left:895px;top:297.85px;font-size:12.7px;line-height:12.7px;font-weight:400;color:#222;">Parent Product</div>
<div class="r" style="left:895px;top:312.2px;width:320px;height:1.3999999999999773px;background:#9a9a9a"></div>
<div class="r" style="left:1203px;top:295px;width:0;height:0;border-left:4px solid transparent;border-right:4px solid transparent;border-top:4.5px solid #707070"></div>
<div class="t " style="left:201px;top:349.16px;font-size:12.1px;line-height:12.1px;font-weight:400;color:#222;">HSNCODE</div>
<div class="r" style="left:201px;top:365.2px;width:146.60000000000002px;height:1.400000000000034px;background:#9a9a9a"></div>
<div class="t " style="left:374.6px;top:348.65px;font-size:12.7px;line-height:12.7px;font-weight:400;color:#222;">ReOrder Qty</div>
<div class="r" style="left:374.6px;top:365.2px;width:146.39999999999998px;height:1.3999999999999773px;background:#9a9a9a"></div>
<div class="t " style="left:548px;top:348.65px;font-size:12.7px;line-height:12.7px;font-weight:400;color:#222;">ReOrder Level</div>
<div class="r" style="left:548px;top:365.2px;width:320px;height:1.3999999999999773px;background:#9a9a9a"></div>
<div class="t " style="left:895px;top:350.85px;font-size:12.7px;line-height:12.7px;font-weight:400;color:#222;">Material Pricing Group</div>
<div class="r" style="left:895px;top:365.2px;width:320px;height:1.3999999999999773px;background:#9a9a9a"></div>
<div class="r" style="left:1203px;top:348px;width:0;height:0;border-left:4px solid transparent;border-right:4px solid transparent;border-top:4.5px solid #707070"></div>
<div class="t " style="left:201px;top:401.85px;font-size:12.7px;line-height:12.7px;font-weight:400;color:#222;">Product Link</div>
<div class="r" style="left:201px;top:418.4px;width:1014px;height:1.3999999999999773px;background:#9a9a9a"></div>
<div class="t " style="left:201px;top:454.55px;font-size:12.7px;line-height:12.7px;font-weight:400;color:#222;">Remarks</div>
<div class="r" style="left:201px;top:471.6px;width:678.5px;height:1.3999999999999773px;background:#9a9a9a"></div>
<div class="r" style="left:884px;top:413.4px;width:335.5px;height:76.10000000000002px;border:5px solid #22ab48;box-sizing:border-box;background:#fff"></div>
<div class="t " style="left:903.6px;top:424.33px;font-size:14.5px;line-height:14.5px;font-weight:400;color:#111;letter-spacing:-0.1px;">Big Image</div>
<div class="r" style="left:897.8px;top:445px;width:199.20000000000005px;height:38.60000000000002px;background:#d8dde4"></div>
<div class="r" style="left:904px;top:452.4px;width:66.70000000000005px;height:22.400000000000034px;background:#e9e9ed;border:1px solid #8f8f9d;border-radius:3px;box-sizing:border-box"></div>
<div class="t " style="left:909.8px;top:458.15px;font-size:14px;line-height:14px;font-weight:400;color:#111;letter-spacing:-0.25px;">Browse...</div>
<div class="t " style="left:976px;top:457.98px;font-size:14.2px;line-height:14.2px;font-weight:400;color:#111;letter-spacing:-0.3px;">No file selected.</div>
<div class="r" style="left:201px;top:491px;width:1014.5px;height:199.5px;border:1px solid #e3e3e3;box-sizing:border-box;background:#fcfcfc"></div>
<div class="r" style="left:201.8px;top:491.8px;width:144.0px;height:42.99999999999994px;background:#3f51b5"></div>
<div class="t" style="left:73.5px;width:400px;text-align:center;top:507.30px;font-size:13px;line-height:13px;font-weight:700;color:#fff;">Item / Parts</div>
<div class="t " style="left:367.9px;top:507.30px;font-size:13px;line-height:13px;font-weight:700;color:#777;">Product Complaints</div>
<div class="t " style="left:534.3px;top:507.30px;font-size:13px;line-height:13px;font-weight:700;color:#777;">Applicable Service Charges</div>
<div class="r" style="left:202px;top:535px;width:1013px;height:133px;background:#fcfcfc"></div>
<div class="r" style="left:202px;top:668px;width:1013px;height:10px;background:linear-gradient(rgba(55,65,75,0.8) 0%, rgba(55,65,75,0.62) 22%, rgba(55,65,75,0.32) 50%, rgba(55,65,75,0.1) 78%, rgba(55,65,75,0) 100%)"></div>
<div class="r" style="left:202px;top:535px;width:1013px;height:37.5px;background:#eef1f5"></div>
<div class="r" style="left:202px;top:572px;width:1013px;height:1px;background:#dfe3e8"></div>
<div class="t " style="left:219.8px;top:544.46px;font-size:18px;line-height:18px;font-weight:700;color:#1f2d38;">Item / Parts</div>
<div class="r" style="left:1140.2px;top:541.4px;width:62.59999999999991px;height:25.700000000000045px;border:1px solid #3a8bd0;box-sizing:border-box"></div>
<svg class="r" style="left:1148px;top:549px" width="10" height="10" viewBox="0 0 10 10"><path d="M5 0.5 V9.5 M0.5 5 H9.5" stroke="#3a8bd0" stroke-width="2.2"/></svg>
<div class="t " style="left:1161.2px;top:549.39px;font-size:11px;line-height:11px;font-weight:400;color:#3a8bd0;">Create</div>
<div class="r" style="left:213.6px;top:584.5px;width:995.4px;height:28.0px;background:#3b4550"></div>
<div class="t " style="left:217.8px;top:592.35px;font-size:13.05px;line-height:13.05px;font-weight:700;color:#fff;">Material Description</div>
<div class="t " style="left:529px;top:592.35px;font-size:13.05px;line-height:13.05px;font-weight:700;color:#fff;">UOM</div>
<div class="t " style="left:619px;top:592.35px;font-size:13.05px;line-height:13.05px;font-weight:700;color:#fff;">Warranty Months</div>
<div class="t " style="left:882px;top:592.35px;font-size:13.05px;line-height:13.05px;font-weight:700;color:#fff;">Quantity Used</div>
<div class="t " style="left:1104px;top:592.35px;font-size:13.05px;line-height:13.05px;font-weight:700;color:#fff;">Action</div>
<div class="r" style="left:213.6px;top:612.5px;width:995.4px;height:28.5px;background:#f4f4f4"></div>
<div class="r" style="left:213.6px;top:640.5px;width:995.4px;height:1.0px;background:#ddd"></div>
<div class="t" style="left:511px;width:400px;text-align:center;top:621.00px;font-size:13px;line-height:13px;font-weight:400;color:#333;">No records found!</div>
<div class="r" style="left:207px;top:718.7px;width:23px;height:12px;border-radius:6px;background:#f08cae"></div>
<div class="r" style="left:221.8px;top:716px;width:18px;height:18px;border-radius:50%;background:#e91e63;box-shadow:0 1px 2px rgba(0,0,0,0.3)"></div>
<div class="t " style="left:246.8px;top:719.93px;font-size:12.6px;line-height:12.6px;font-weight:400;color:#333;">Active</div>
<div class="r" style="left:1093.2px;top:714px;width:53.799999999999955px;height:26px;border:1.2px solid #26a69a;border-radius:1.5px;box-sizing:border-box"></div>
<svg class="r" style="left:1101.2px;top:722.5px" width="11" height="11" viewBox="0 0 11 11">
<path d="M0.7 0.7 H8.3 L10.3 2.7 V10.3 H0.7 Z" fill="none" stroke="#26a69a" stroke-width="1.4"/>
<rect x="2.6" y="1" width="5" height="3" fill="#26a69a"/>
<rect x="2.6" y="6.2" width="5.8" height="3.6" fill="none" stroke="#26a69a" stroke-width="1"/>
</svg>
<div class="t " style="left:1115.8px;top:721.98px;font-size:11.6px;line-height:11.6px;font-weight:400;color:#26a69a;letter-spacing:-0.5px;">Save</div>
<div class="r" style="left:1150.8px;top:714px;width:58.5px;height:26px;border:1.2px solid #3b4550;border-radius:1.5px;box-sizing:border-box"></div>
<svg class="r" style="left:1158.8px;top:723.5px" width="14" height="10" viewBox="0 0 14 10">
<path d="M5.2 0.8 H12.8 L7.6 8.2 H0.3 Z" fill="none" stroke="#3b4550" stroke-width="1" stroke-linejoin="round"/>
<path d="M5.2 0.8 H12.8 L9.6 5.3 H2.1 Z" fill="#3b4550"/>
</svg>
<div class="t " style="left:1174.8px;top:722.81px;font-size:11.8px;line-height:11.8px;font-weight:400;color:#3b4550;letter-spacing:-0.3px;">Clear</div>
<div class="r" style="left:180px;top:772px;width:1050px;height:1.5px;background:#8f98a2"></div>
<div class="t " style="left:198px;top:795.50px;font-size:12.4px;line-height:12.4px;font-weight:400;color:#3a4450;">KEY CRM © 2018-19.</div>
<div class="t " style="left:627.3px;top:796.21px;font-size:11.8px;line-height:11.8px;font-weight:400;color:#333;">Branch:</div>
<div class="r" style="left:671px;top:789px;width:112px;height:26px;background:#e6e7eb"></div>
<div class="t " style="left:679.2px;top:798.35px;font-size:11.4px;line-height:11.4px;font-weight:400;color:#111;">VHA - Chennai</div>
<svg class="r" style="left:765px;top:798px" width="11" height="10" viewBox="0 0 11 10"><rect x="0.8" y="0.8" width="9.4" height="8.4" rx="1.5" fill="none" stroke="#111" stroke-width="1.6"/><path d="M3 3.2 H8 L5.5 6.6Z" fill="#111"/></svg>
<div class="t " style="left:996.7px;top:795.73px;font-size:11.9px;line-height:11.9px;font-weight:400;color:#333;">Powered by</div>
<div class="t " style="left:1067.4px;top:795.43px;font-size:12.25px;line-height:12.25px;font-weight:400;color:#444c55;">Experts In Solution Pvt.Ltd</div>

</body></html>
